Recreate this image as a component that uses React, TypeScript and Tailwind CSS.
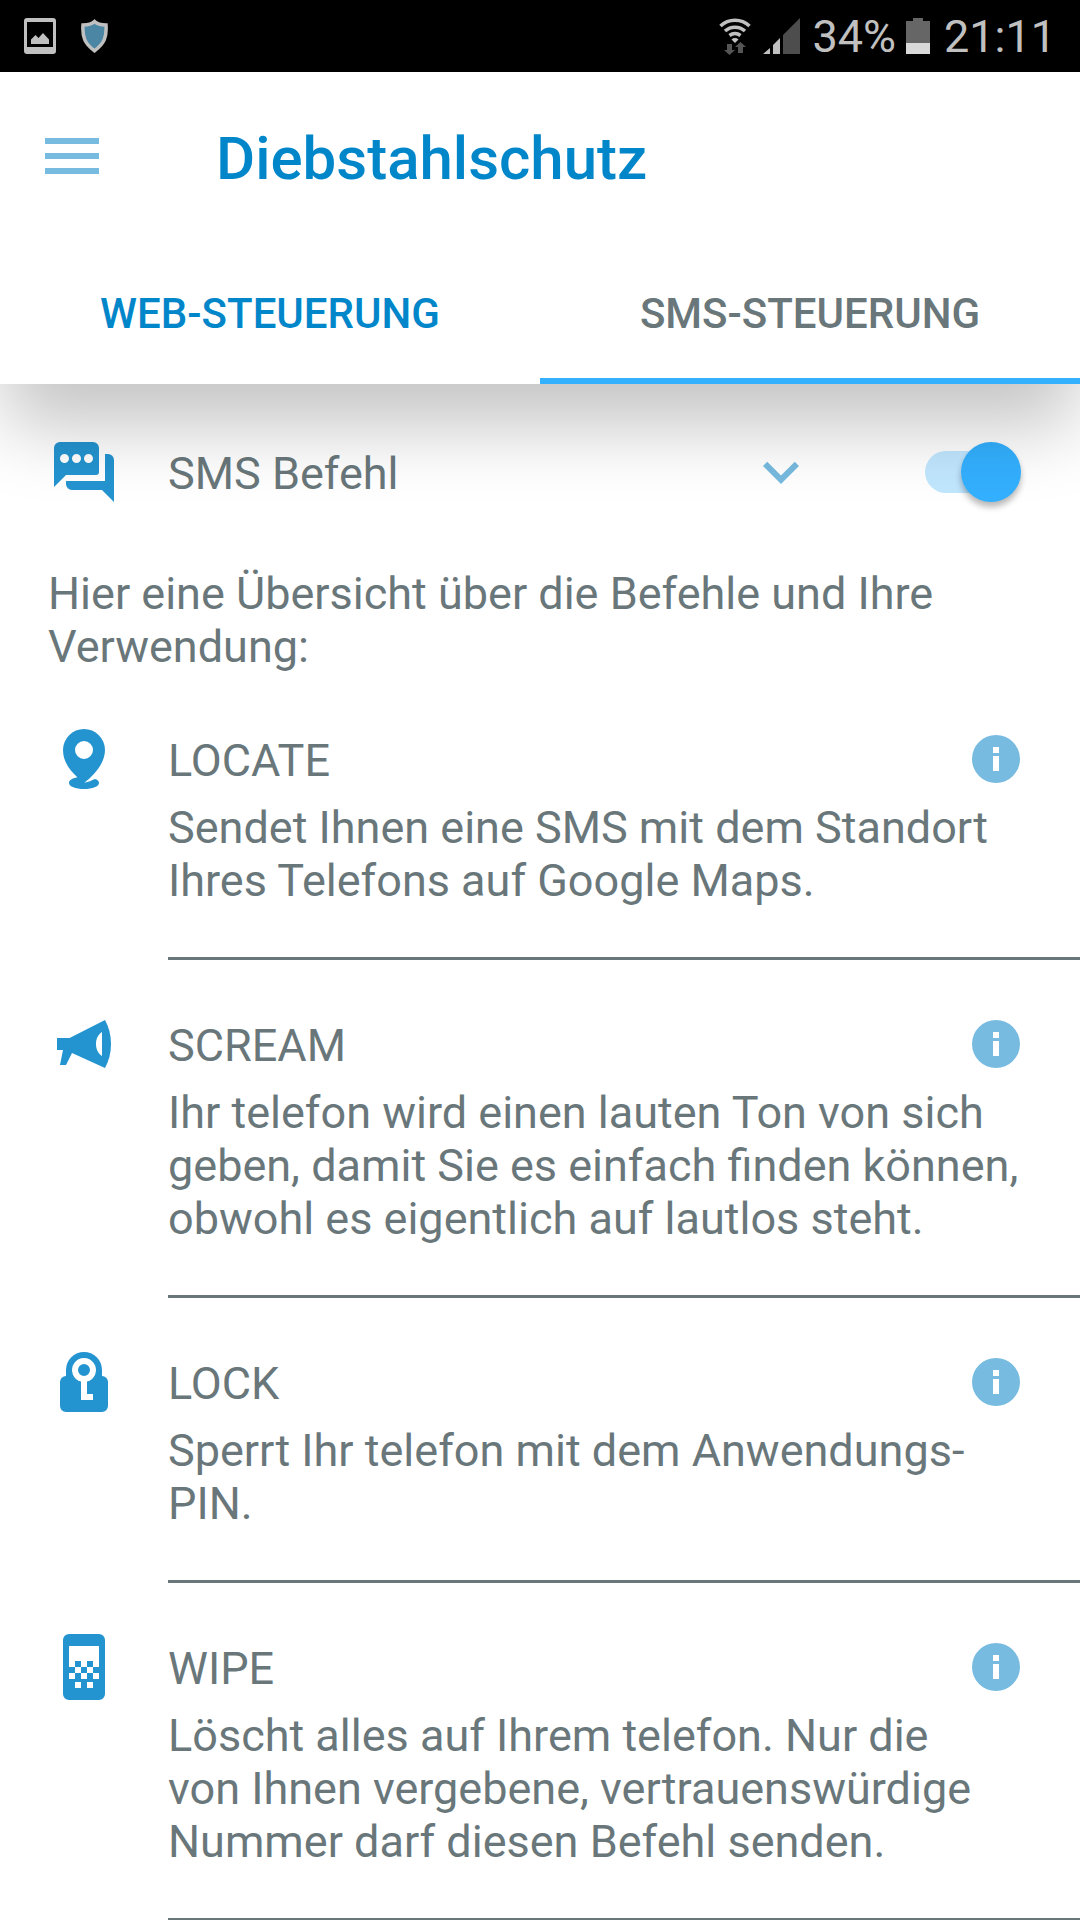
import { useState } from "react";
import type { ReactNode } from "react";

const TABS = [
  { id: "web", label: "WEB-STEUERUNG" },
  { id: "sms", label: "SMS-STEUERUNG" },
];

function Glyph({ children }: { children: ReactNode }) {
  return (
    <svg viewBox="0 0 24 24" className="size-[72px] shrink-0" fill="currentColor" fillRule="evenodd" aria-hidden="true">
      {children}
    </svg>
  );
}

const COMMANDS = [
  {
    name: "LOCATE",
    text: "Sendet Ihnen eine SMS mit dem Standort Ihres Telefons auf Google Maps.",
    icon: (
      <path d="M12 2a7 7 0 0 0-7 7c0 4 2.5 7 4.8 9.1C8 18.4 7 19.1 7 20c0 1.2 2.2 2 5 2s5-.8 5-2c0-.6-.5-1.1-1.4-1.3-.9.5-2.2 1-3.5 1.2C15.2 17.6 19 13.4 19 9a7 7 0 0 0-7-7zm0 4a3 3 0 1 1 0 6 3 3 0 0 1 0-6z" />
    ),
  },
  {
    name: "SCREAM",
    text: "Ihr telefon wird einen lauten Ton von sich geben, damit Sie es einfach finden können, obwohl es eigentlich auf lautlos steht.",
    icon: (
      <path d="M3 10h4.2L19 4c1.3 2.3 2 5 2 8s-.7 5.700-2 8L8 15l-2 4H4l1-5H3zM18 8c-1.3.8-2 2.3-2 4s.7 3.2 2 4z" />
    ),
  },
  {
    name: "LOCK",
    text: "Sperrt Ihr telefon mit dem Anwendungs-PIN.",
    icon: (
      <path d="M6 10V8a6 6 0 0 1 12 0v2a2 2 0 0 1 2 2v8a2 2 0 0 1-2 2H6a2 2 0 0 1-2-2v-8a2 2 0 0 1 2-2zm5 1.870V18h4v-2h-2v-4.130A4 4 0 1 0 11 11.870zM12 6a2 2 0 1 1 0 4 2 2 0 0 1 0-4z" />
    ),
  },
  {
    name: "WIPE",
    text: "Löscht alles auf Ihrem telefon. Nur die von\u00a0Ihnen vergebene, vertrauenswürdige Nummer darf diesen Befehl senden.",
    icon: (
      <path d="M7 1h10a2 2 0 0 1 2 2v18a2 2 0 0 1-2 2H7a2 2 0 0 1-2-2V3a2 2 0 0 1 2-2zm0 4v7h2v-2h2v2h2v-2h2v2h2V5zm2 7v2h2v-2zm4 0v2h2v-2zm-6 2v2h2v-2zm4 0v2h2v-2zm4 0v2h2v-2zm-6 3v2h2v-2zm4 0v2h2v-2z" />
    ),
  },
];

function StatusBar() {
  return (
    <div className="flex h-[72px] items-center bg-black px-6 text-[45px] leading-[72px] text-[#c0c0c0]">
      <svg viewBox="0 0 32 36" className="h-9 w-8" fill="currentColor" fillRule="evenodd">
        <path d="M3 0h26a3 3 0 0 1 3 3v30a3 3 0 0 1-3 3H3a3 3 0 0 1-3-3V3a3 3 0 0 1 3-3zm0 4v25h26V4z" />
        <path d="M7 26v-4.500l4.500-4.500 3 3 4.500-5 6 6.500V26z" />
      </svg>
      <svg viewBox="0 0 27 34" className="ml-[25px] h-[34px] w-[27px]">
        <path
          d="M13.500 2.500c2.500 2.500 7 3.500 11.500 3.500.8 12-1.500 18.500-11.500 25.800C3.500 24.500 1.200 18 2 6c4.500 0 9-1 11.500-3.500z"
          fill="#4b87a4"
          stroke="#c0c0c0"
          strokeWidth="3.500"
        />
      </svg>
      <div className="ml-auto flex items-center">
        <svg viewBox="0 0 32 37" className="h-[37px] w-8" fill="none" stroke="currentColor" strokeWidth="3.500">
          <path d="M1.500 8a21 21 0 0 1 29 0M6 13a15 15 0 0 1 20 0M10.500 17.500a9 9 0 0 1 11 0" />
          <path d="M12.500 21.500a5 5 0 0 1 7 0L16 25z" fill="currentColor" stroke="none" />
          <path d="M8 26h5v6h3l-5.500 5L5 32h3zM19 35v-6h-3l5.500-5 5.500 5h-3v6z" fill="#555555" stroke="none" />
        </svg>
        <svg viewBox="0 0 37 36" className="ml-3 h-9 w-[37px]" fill="currentColor">
          <path d="M0 36l7-6v6zM10 27l7-7v16h-7z" />
          <path d="M20 17L37 0v36H20z" fill="#4d4d4d" />
        </svg>
        <span className="ml-3 pt-[2px]">34%</span>
        <svg viewBox="0 0 24 36" className="ml-[10px] h-9 w-6">
          <path d="M7 0h10v3h7v22H0V3h7z" fill="#666666" />
          <path d="M0 25h24v11H0z" fill="#d9d9d9" />
        </svg>
        <span className="ml-[14px] pt-[2px]">21:11</span>
      </div>
    </div>
  );
}

function CommandItem({ name, text, icon }: { name: string; text: string; icon: ReactNode }) {
  return (
    <li className="flex pl-12">
      <div className="flex h-42 items-center text-[#2494d0]">
        <Glyph>{icon}</Glyph>
      </div>
      <div className="ml-12 flex-1 border-b-3 border-[#69777b] pb-[50px] pt-[57px]">
        <div className="mb-[15px] flex h-[54px] items-center justify-between pr-12">
          <h2 className="pt-[3px]">{name}</h2>
          <button type="button" aria-label={`Info zu ${name}`} className="text-[#77bbe0]">
            <Glyph>
              <path d="M12 4a8 8 0 1 1 0 16 8 8 0 0 1 0-16zm-1 4v2h2V8zm0 3v5h2v-5z" />
            </Glyph>
          </button>
        </div>
        <p className="pr-12">{text}</p>
      </div>
    </li>
  );
}

export default function App() {
  const [tab, setTab] = useState("sms");
  const [enabled, setEnabled] = useState(true);

  return (
    <div className="min-h-screen overflow-hidden bg-white font-['Roboto',sans-serif] text-[45px] leading-[53px] text-[#69777b]">
      <header className="relative z-10 bg-white shadow-[0_46px_70px_-4px_rgba(0,0,0,0.23)]">
        <StatusBar />
        <div className="flex h-[168px] items-center pl-9">
          <button type="button" aria-label="Menü" className="text-[#77bbe0]">
            <Glyph>
              <path d="M3 6h18v2H3zM3 11h18v2H3zM3 16h18v2H3z" />
            </Glyph>
          </button>
          <h1 className="ml-[108px] pt-[5px] text-[60px] font-medium leading-[70px] text-[#0286ca]">
            Diebstahlschutz
          </h1>
        </div>
        <div role="tablist" className="grid grid-cols-2">
          {TABS.map((t) => (
            <button
              key={t.id}
              type="button"
              role="tab"
              aria-selected={tab === t.id}
              onClick={() => setTab(t.id)}
              className={`h-36 border-b-6 pt-2 text-[42px] font-medium ${
                tab === t.id ? "border-[#33b1ff] text-[#69777b]" : "border-transparent text-[#0286ca]"
              }`}
            >
              {t.label}
            </button>
          ))}
        </div>
      </header>

      <main>
        <div className="flex h-44 items-center pl-12 pr-[59px]">
          <span className="text-[#2494d0]">
            <Glyph>
              <path d="M4 2h11a2 2 0 0 1 2 2v8a1 1 0 0 1-1 1H6l-4 4V4a2 2 0 0 1 2-2zm1.500 4a1.500 1.500 0 1 0 0 3 1.500 1.500 0 0 0 0-3zm4 0a1.500 1.500 0 1 0 0 3 1.500 1.500 0 0 0 0-3zm4 0a1.500 1.500 0 1 0 0 3 1.500 1.500 0 0 0 0-3z" />
              <path d="M19 6h1a2 2 0 0 1 2 2v14l-4-4H8a2 2 0 0 1-2-2v-1h13z" />
            </Glyph>
          </span>
          <label htmlFor="sms-command" className="ml-12 flex-1 pt-[3px]">
            SMS Befehl
          </label>
          <button type="button" aria-label="Details anzeigen" className="mr-[108px] text-[#77bbe0]">
            <Glyph>
              <path d="M16.590 8.590 12 13.170 7.410 8.590 6 10l6 6 6-6z" />
            </Glyph>
          </button>
          <input
            id="sms-command"
            type="checkbox"
            role="switch"
            checked={enabled}
            onChange={(e) => setEnabled(e.target.checked)}
            className="flex h-[60px] w-24 shrink-0 appearance-none items-center before:h-[42px] before:w-21 before:rounded-full before:bg-[#d0d0d0] after:-ml-21 after:size-[60px] after:rounded-full after:bg-[#f1f1f1] after:shadow-[0_5px_6px_rgba(0,0,0,0.28)] checked:before:bg-[#c1e7ff] checked:after:-ml-12 checked:after:bg-[#33b0ff]"
          />
        </div>
        <p className="px-12 pb-[2px] pt-[7px]">Hier eine Übersicht über die Befehle und Ihre Verwendung:</p>
        <ul>
          {COMMANDS.map((c) => (
            <CommandItem key={c.name} {...c} />
          ))}
        </ul>
      </main>
    </div>
  );
}
